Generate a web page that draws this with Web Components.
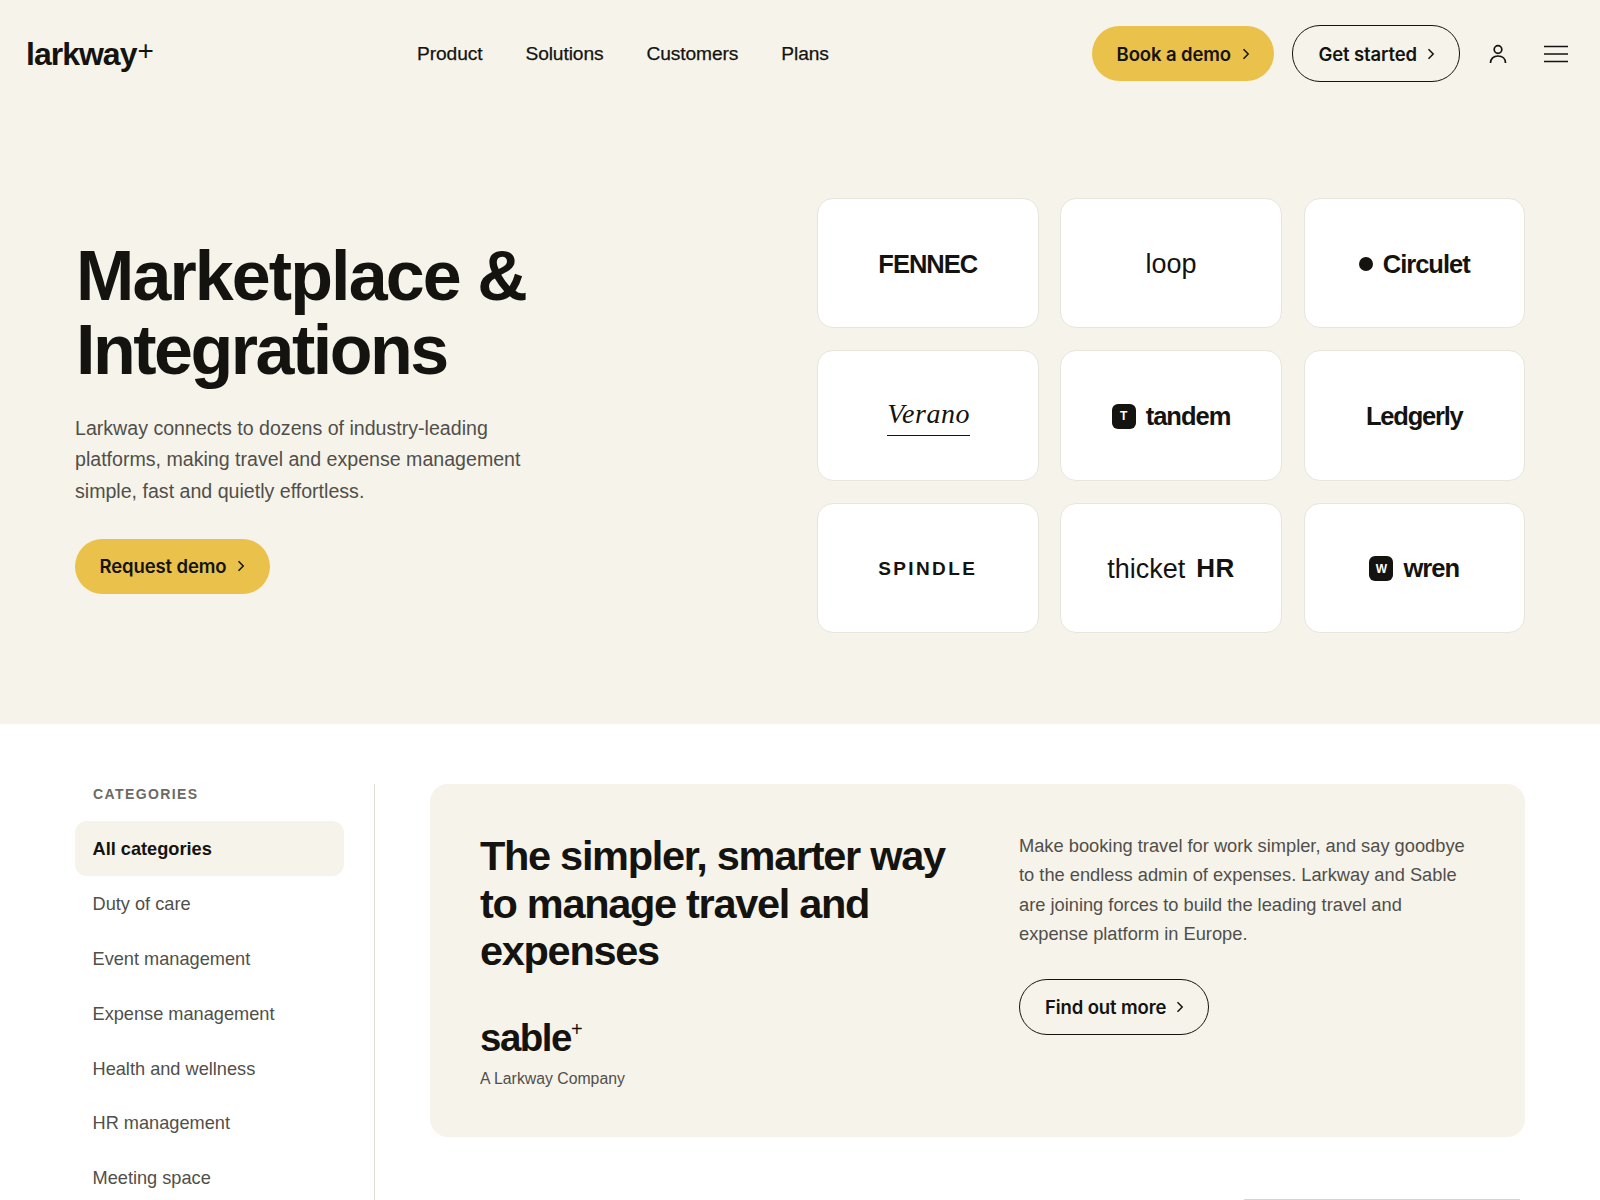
<!DOCTYPE html>
<html lang="en"><head><meta charset="utf-8"><title>Marketplace</title>
<style>
html,body{margin:0;padding:0;background:#fff}
body{width:1600px;height:1200px;overflow:hidden;font-family:"Liberation Sans",Arial,sans-serif;color:#14130f}
</style></head><body>
<lk-header></lk-header>
<lk-hero></lk-hero>
<lk-browse></lk-browse>
<script>
const chev='<svg width="8" height="12" viewBox="0 0 8 12" fill="none" stroke="currentColor" stroke-width="1.5"><path d="M1.5 1.2 6.2 6 1.5 10.8"/></svg>';
function def(name,html){customElements.define(name,class extends HTMLElement{constructor(){super();this.attachShadow({mode:'open'}).innerHTML=typeof html==='function'?html(this):html}})}
def('lk-btn',el=>{const o=el.hasAttribute('outline');return `<style>
:host{display:inline-flex}
a{display:inline-flex;align-items:center;gap:${o?10:11}px;box-sizing:border-box;height:${el.getAttribute('h')||55}px;padding:0 ${o?24:24.5}px 0 ${o?25:24.5}px;border-radius:28px;font:600 18.5px "Inter","Liberation Sans",sans-serif;letter-spacing:-.12px;color:#14130f;white-space:nowrap;
${o?'border:1.5px solid #14130f;background:transparent':'background:#e9c14b'}}
svg{display:block}
</style><a><slot></slot>${chev}</a>`});
def('lk-header',`<style>
:host{display:flex;align-items:center;box-sizing:border-box;height:108px;background:#f6f3eb;padding:0 32px 1px 26px}
.logo{font:700 32px/1 "Liberation Sans",sans-serif;letter-spacing:-1px;width:391px;display:flex;align-items:flex-start}
.logo span{font-weight:400;font-size:28px;line-height:.7;margin-left:1px;margin-top:3px}
nav{display:flex;gap:43px;font:400 19.2px "Liberation Sans",sans-serif;letter-spacing:-.1px;-webkit-text-stroke:.25px #14130f;margin-top:1px}
.r{margin-left:auto;display:flex;align-items:center}
.u{margin-left:29px;margin-right:37px;display:block}
</style>
<div class="logo">larkway<span>+</span></div>
<nav><span>Product</span><span>Solutions</span><span>Customers</span><span>Plans</span></nav>
<div class="r"><lk-btn style="margin-right:18px">Book a demo</lk-btn><lk-btn outline h="57">Get started</lk-btn>
<svg class="u" width="18" height="20" viewBox="0 0 18 20" fill="none" stroke="#14130f" stroke-width="1.7"><circle cx="9" cy="5.5" r="3.8"/><path d="M1.5 19c0-4.2 3-7 7.5-7s7.500 2.800 7.500 7"/></svg>
<svg width="24" height="18" viewBox="0 0 24 18" stroke="#14130f" stroke-width="1.7"><path d="M0 1.500H24M0 9H24M0 16.500H24"/></svg></div>`);
def('lk-card',`<style>
:host{display:flex;align-items:center;justify-content:center;box-sizing:border-box;height:130.25px;background:#fff;border:1.500px solid #e8e5da;border-radius:16px;color:#14130f;font:700 25.5px "Liberation Sans",sans-serif;letter-spacing:-1px;min-width:0;padding-top:2px}
</style><slot></slot>`);
def('lk-hero',`<style>
:host{display:grid;grid-template-columns:1fr 708px;box-sizing:border-box;height:616px;background:#f6f3eb;padding:90px 75px 0 75px;align-items:start}
h1{font:700 70px/74px "Liberation Sans",sans-serif;margin:41px 0 26px;color:#14130f;padding-left:1px}
h1 span{display:block}
p{font:400 19.6px/31.300px "Liberation Sans",sans-serif;color:#504f4a;margin:0 0 32px}
.g{display:grid;grid-template-columns:221.5px 222px 221.5px;gap:22px 21.500px}
.dot{display:inline-block;width:14px;height:14px;border-radius:50%;background:#14130f;margin-right:10px;vertical-align:3px}
.sq{display:inline-flex;align-items:center;justify-content:center;width:24px;height:25px;border-radius:6px;background:#14130f;color:#fff;font:700 12px "Liberation Sans",sans-serif;letter-spacing:0;margin-right:10px;vertical-align:1px}
.ver{font:italic 400 28px "Liberation Serif",serif;letter-spacing:.6px;border-bottom:1.500px solid #14130f;padding-bottom:5px;margin:2px 0 0 2px}
.sp{font-size:19px;letter-spacing:2.4px}
.th,.l{font-weight:400;letter-spacing:0;font-size:27px;margin-top:1px}
</style>
<div><h1><span style="letter-spacing:-1.9px">Marketplace &amp;</span><span style="letter-spacing:-2.5px">Integrations</span></h1>
<p>Larkway connects to dozens of industry-leading<br>platforms, making travel and expense management<br>simple, fast and quietly effortless.</p>
<lk-btn>Request demo</lk-btn></div>
<div class="g">
<lk-card>FENNEC</lk-card><lk-card><span class="l">loop</span></lk-card><lk-card><span class="dot"></span>Circulet</lk-card>
<lk-card><span class="ver">Verano</span></lk-card><lk-card><span class="sq">T</span>tandem</lk-card><lk-card><span style="letter-spacing:-1.2px">Ledgerly</span></lk-card>
<lk-card><span class="sp">SPINDLE</span></lk-card><lk-card><span class="th">thicket</span><span style="margin-left:11px;letter-spacing:.5px;font-size:26px">HR</span></lk-card><lk-card><span class="sq">W</span>wren</lk-card>
</div>`);
def('lk-side',`<style>
:host{display:block;box-sizing:border-box;width:300px;border-right:1px solid #dfdcd0;padding-right:30px}
h4{font:700 14px/20px "Liberation Sans",sans-serif;letter-spacing:1.4px;color:#6b6a64;margin:0 0 17px;padding-left:18px}
</style><h4>CATEGORIES</h4><slot></slot>`);
def('lk-cat',el=>`<style>
:host{display:block;box-sizing:border-box;height:54.9px;padding:1px 0 0 17.5px;border-radius:12px;font:${el.hasAttribute('active')?'700':'400'} 18.2px/54px "Liberation Sans",sans-serif;color:${el.hasAttribute('active')?'#14130f':'#504f4a'};${el.hasAttribute('active')?'background:#f6f3eb':''}}
</style><slot></slot>`);
def('lk-feature',`<style>
:host{display:grid;grid-template-columns:539px 1fr;box-sizing:border-box;height:353px;background:#f6f3eb;border-radius:18px;padding:48px 48px 0 50px}
h2{font:700 41.5px/47.6px "Liberation Sans",sans-serif;letter-spacing:-1.300px;margin:0 0 41px;color:#14130f}
.s{font:700 38.5px/44px "Liberation Sans",sans-serif;letter-spacing:-1.500px;display:flex}
.s span{font-size:20px;line-height:26px;letter-spacing:0;font-weight:400}
.c{font:400 15.8px/20px "Liberation Sans",sans-serif;color:#504f4a;margin-top:9px}
p{font:400 18.28px/29.400px "Liberation Sans",sans-serif;color:#504f4a;margin:-1px 0 30px}
</style>
<div><h2>The simpler, smarter way<br>to manage travel and<br>expenses</h2><div class="s">sable<span>+</span></div><div class="c">A Larkway Company</div></div>
<div><p>Make booking travel for work simpler, and say goodbye<br>to the endless admin of expenses. Larkway and Sable<br>are joining forces to build the leading travel and<br>expense platform in Europe.</p><lk-btn outline h="56">Find out more</lk-btn></div>`);
def('lk-browse',`<style>
:host{display:grid;grid-template-columns:300px 1fr;column-gap:55px;box-sizing:border-box;padding:60px 75px 0 75px;position:relative;height:476px}
.b{position:absolute;left:1244px;top:474.6px;width:276px;height:1.4px;background:#d8d5c6}
</style>
<lk-side><lk-cat active>All categories</lk-cat><lk-cat>Duty of care</lk-cat><lk-cat>Event management</lk-cat><lk-cat>Expense management</lk-cat><lk-cat>Health and wellness</lk-cat><lk-cat>HR management</lk-cat><lk-cat>Meeting space</lk-cat></lk-side>
<lk-feature></lk-feature><div class="b"></div>`);
</script>
</body></html>
